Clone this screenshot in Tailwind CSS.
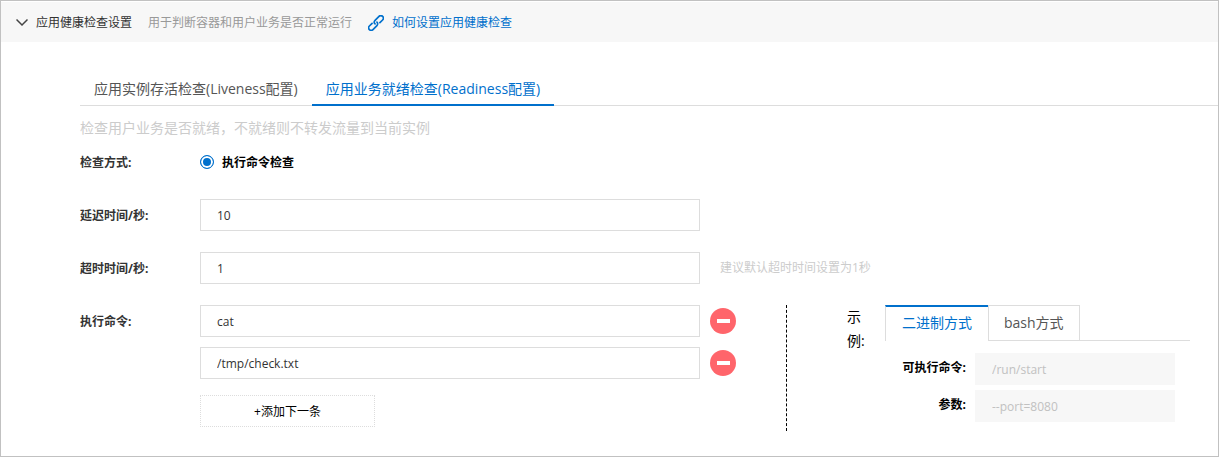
<!DOCTYPE html>
<html lang="zh-CN">
<head>
    <meta charset="UTF-8">
    <meta name="viewport" content="width=device-width, initial-scale=1.0">
    <title>应用健康检查设置</title>
    <script src="https://cdn.jsdelivr.net/npm/@tailwindcss/browser@4"></script>
</head>
<body class="min-h-screen flex flex-col bg-white border border-[#c1c1c1] font-['Open_Sans','Noto_Sans_CJK_SC',sans-serif] text-xs text-[#333]">

    <!-- Section header -->
    <header class="flex items-center h-10 mt-px px-[15px] pt-[2px] bg-[#f7f7f7]">
        <button type="button" aria-label="收起" class="mr-2">
            <svg class="w-3 h-3" viewBox="0 0 12 12" fill="none" stroke="#444" stroke-width="1.5">
                <path d="M0.5 2.5L6 8L11.5 2.5"></path>
            </svg>
        </button>
        <h2>应用健康检查设置</h2>
        <span class="ml-4 text-[#999]">用于判断容器和用户业务是否正常运行</span>
        <a href="#" class="flex items-center ml-4 text-[#0070cc]">
            <svg class="w-4 h-4 mr-2" viewBox="0 0 24 24" fill="none" stroke="currentColor" stroke-width="2.5" stroke-linecap="round">
                <g transform="rotate(-45 12 12)">
                    <path d="M14 12a3.8 3.8 0 0 1-3.8 3.8H1.8a3.8 3.8 0 0 1 0-7.6H7.5"></path>
                    <path d="M10 12a3.8 3.8 0 0 1 3.8-3.8H22.2a3.8 3.8 0 0 1 0 7.6H16.5"></path>
                </g>
            </svg>
            如何设置应用健康检查
        </a>
    </header>

    <main class="pl-[79px] pt-8 pb-6">
        <!-- Check type tabs -->
        <nav class="flex h-8 border-b border-[#ddd] text-sm">
            <button type="button" class="px-[14px] pb-px text-[#555]">应用实例存活检查(Liveness配置)</button>
            <button type="button" class="h-8 px-[14px] pb-px border-b-2 border-[#0070cc] text-[#0070cc]">应用业务就绪检查(Readiness配置)</button>
        </nav>

        <p class="mt-[10px] text-sm leading-6 text-[#ccc]">检查用户业务是否就绪，不就绪则不转发流量到当前实例</p>

        <form class="flex flex-col gap-[21px] mt-[6px]">
            <div class="flex items-center h-8">
                <span class="w-[120px] pt-[2px] font-bold">检查方式:</span>
                <label class="flex items-center gap-2 font-bold text-black">
                    <input type="radio" name="mode" checked class="appearance-none w-[14px] h-[14px] rounded-full border border-[#0070cc] bg-white checked:bg-[#0070cc] checked:shadow-[inset_0_0_0_2px_white]">
                    <span class="pt-[2px]">执行命令检查</span>
                </label>
            </div>

            <div class="flex items-center">
                <label for="delay" class="w-[120px] pt-[2px] font-bold">延迟时间/秒:</label>
                <input id="delay" type="text" value="10" class="w-[500px] h-8 px-4 border border-[#ddd]">
            </div>

            <div class="flex items-center">
                <label for="timeout" class="w-[120px] pt-[2px] font-bold">超时时间/秒:</label>
                <input id="timeout" type="text" value="1" class="w-[500px] h-8 px-4 border border-[#ddd]">
                <span class="ml-5 text-[#ccc]">建议默认超时时间设置为1秒</span>
            </div>

            <div class="flex items-start">
                <label for="cmd1" class="w-[120px] pt-px leading-8 font-bold">执行命令:</label>
                <div>
                    <div class="flex items-center gap-[10px] mb-[10px]">
                        <input id="cmd1" type="text" value="cat" class="w-[500px] h-8 px-4 border border-[#ddd]">
                        <button type="button" aria-label="删除" class="flex items-center justify-center w-[26px] h-[26px] rounded-full bg-[#ff656b]">
                            <span class="w-[13px] h-1 bg-white"></span>
                        </button>
                    </div>
                    <div class="flex items-center gap-[10px] mb-4">
                        <input type="text" value="/tmp/check.txt" aria-label="执行命令参数" class="w-[500px] h-8 px-4 border border-[#ddd]">
                        <button type="button" aria-label="删除" class="flex items-center justify-center w-[26px] h-[26px] rounded-full bg-[#ff656b]">
                            <span class="w-[13px] h-1 bg-white"></span>
                        </button>
                    </div>
                    <button type="button" class="w-[175px] h-8 pt-[2px] border border-dotted border-[#ddd] text-black">+添加下一条</button>
                </div>

                <!-- Example panel -->
                <div class="flex flex-1 h-[126px] ml-[50px] mr-7 pl-[60px] border-l border-dashed border-black">
                    <div class="w-[38px] pr-4 text-sm leading-6 text-black">示例:</div>
                    <div class="flex-1">
                        <div class="flex h-9 text-sm">
                            <button type="button" class="px-4 pb-[2px] border-l border-l-[#ddd] border-t-2 border-t-[#0070cc] text-[#0070cc]">二进制方式</button>
                            <button type="button" class="px-[15px] border border-[#ddd] text-[#555]">bash方式</button>
                            <span class="flex-1 border-b border-[#ddd]"></span>
                        </div>
                        <div class="flex flex-col gap-[5px] mt-3 mr-[15px] font-bold text-black">
                            <div class="flex gap-[9px]">
                                <label for="bin" class="w-[81px] pt-px leading-7 text-right">可执行命令:</label>
                                <input id="bin" type="text" value="/run/start" disabled class="flex-1 min-w-0 h-8 px-[17px] bg-[#f7f7f7] font-normal text-[#c1c1c1]">
                            </div>
                            <div class="flex gap-[9px]">
                                <label for="args" class="w-[81px] pt-px leading-7 text-right">参数:</label>
                                <input id="args" type="text" value="--port=8080" disabled class="flex-1 min-w-0 h-8 px-[17px] bg-[#f7f7f7] font-normal text-[#c1c1c1]">
                            </div>
                        </div>
                    </div>
                </div>
            </div>
        </form>
    </main>
</body>
</html>
